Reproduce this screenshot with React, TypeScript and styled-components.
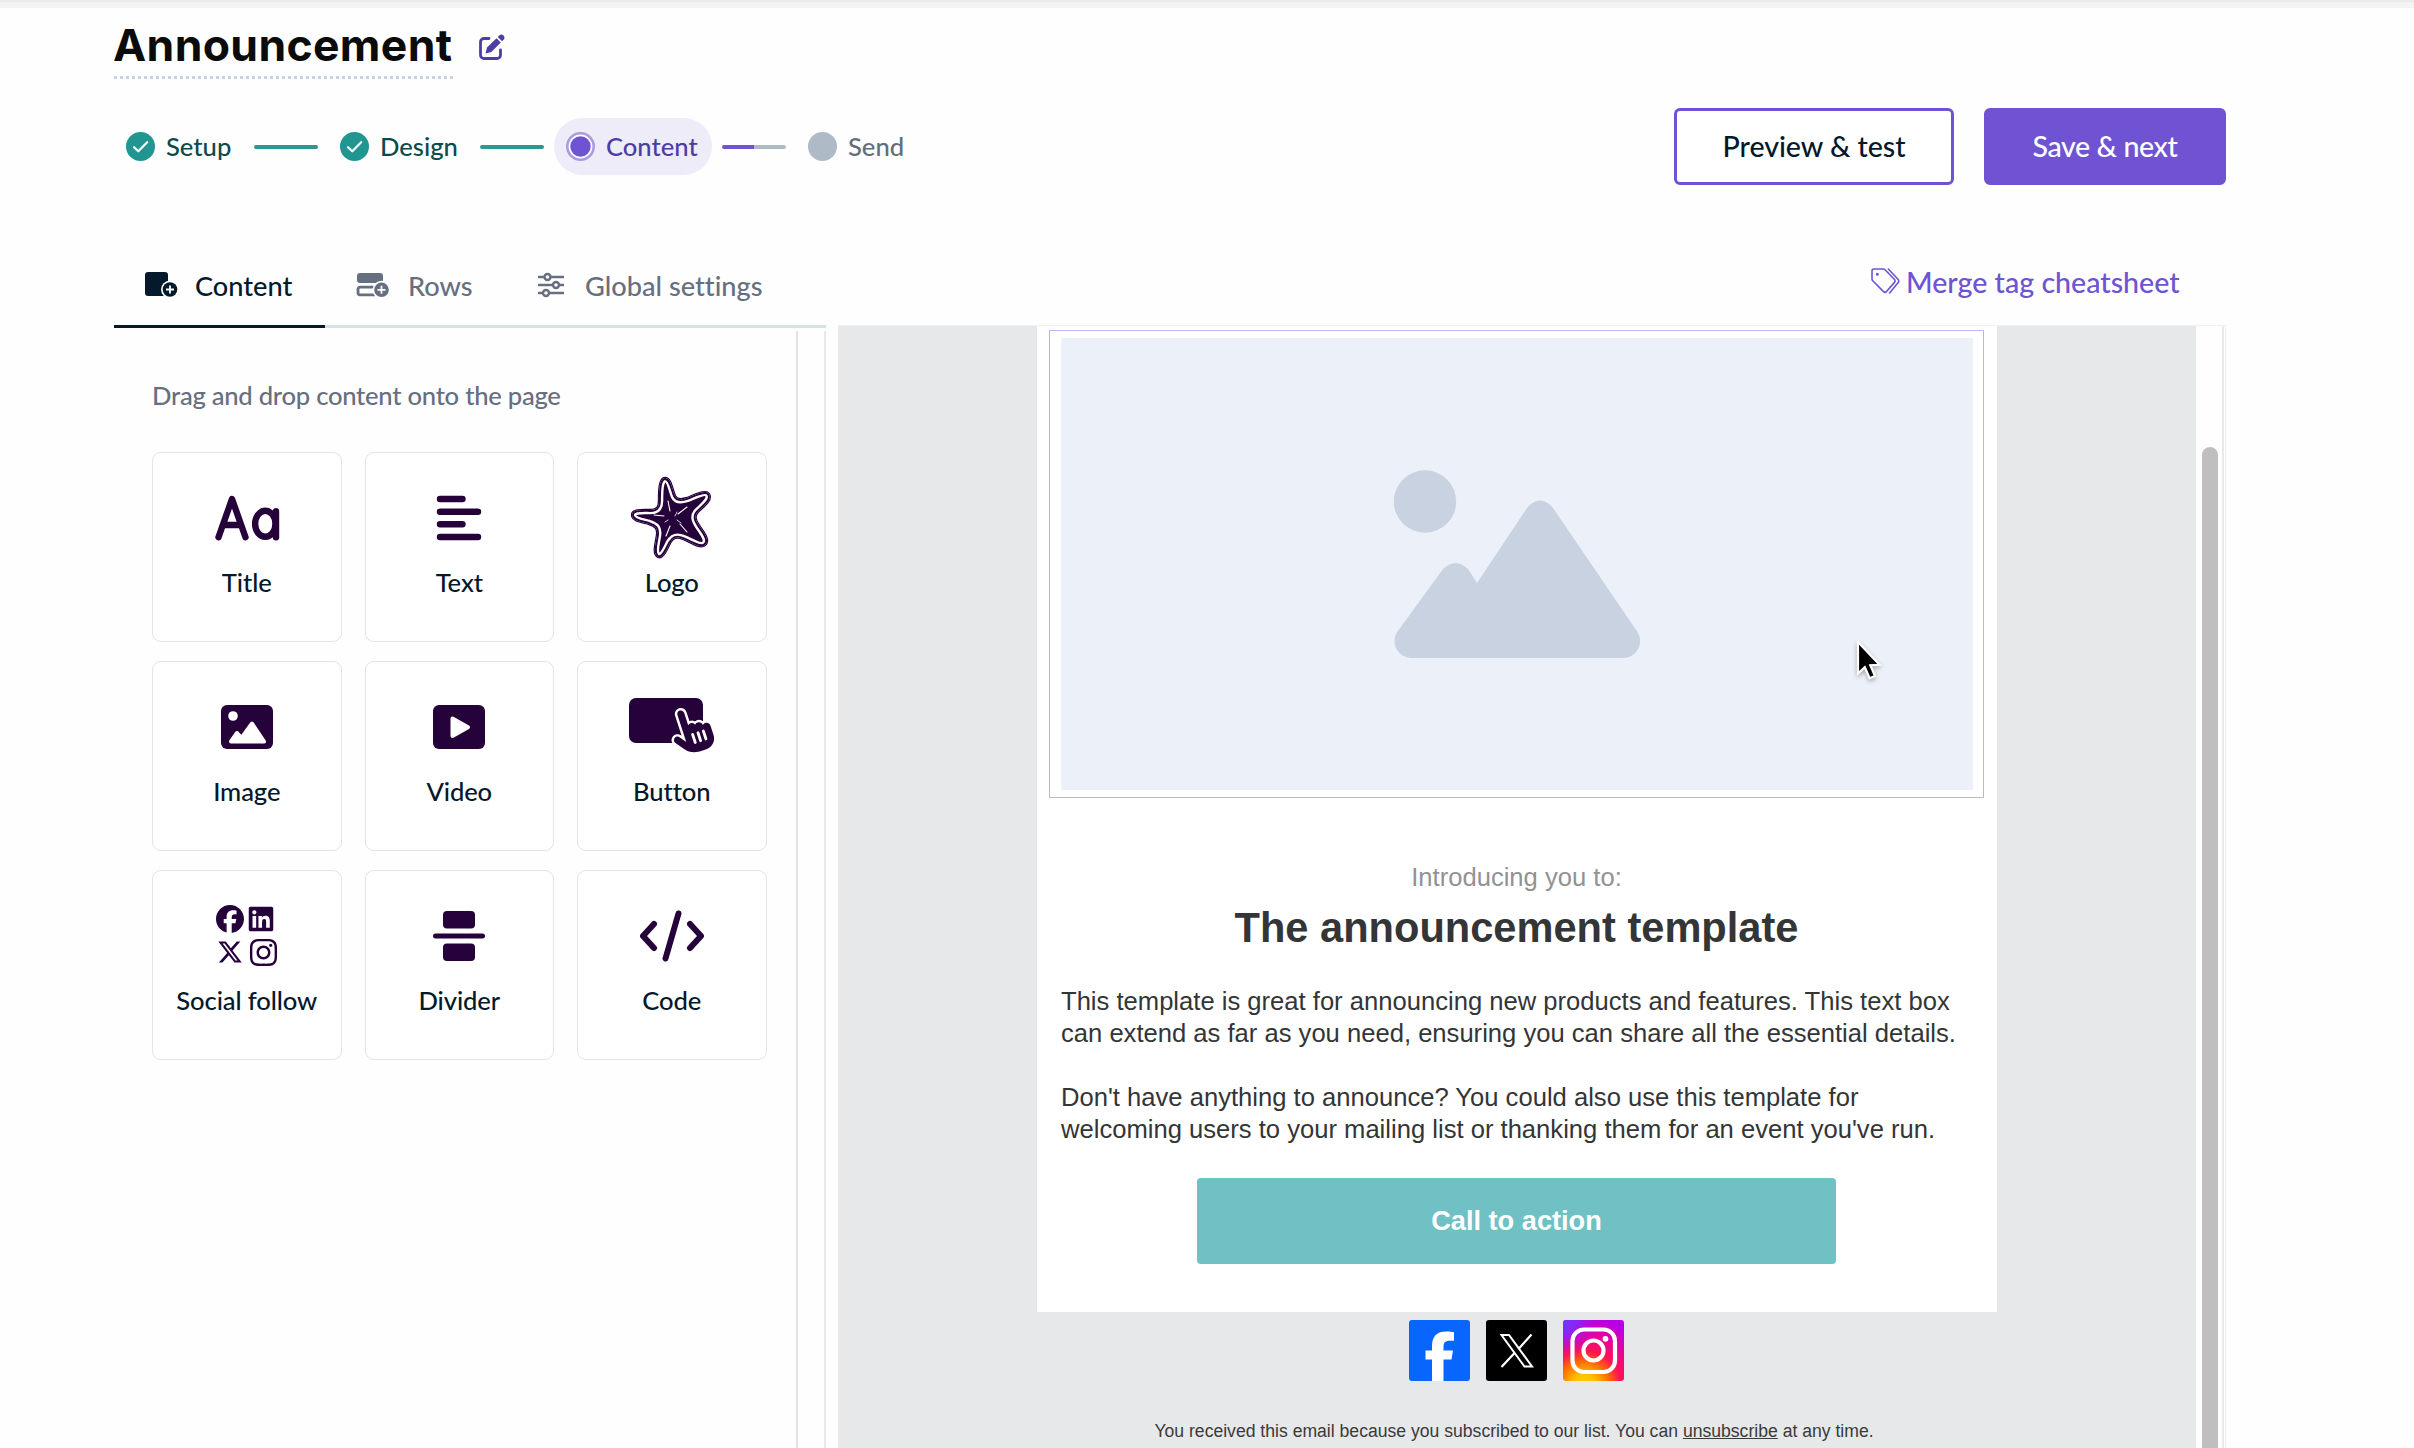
import React from 'react';
import styled, { createGlobalStyle } from 'styled-components';
import { FaFacebook, FaLinkedin, FaXTwitter, FaInstagram, FaHandPointer } from 'react-icons/fa6';

const GlobalStyle = createGlobalStyle`
  * {
    box-sizing: border-box;
  }

  body {
    margin: 0;
    background: #fff;
    font-family: Lato, 'Liberation Sans', sans-serif;
    font-variant-ligatures: none;
    overflow: hidden;
  }
`;

const PageWrapper = styled.div`
  width: 2414px;
  height: 1448px;
  overflow: hidden;
  background: #fefefe;
`;

const TopStrip = styled.div`
  height: 8px;
  background: #f3f3f3;
  border-top: 2px solid #ebebeb;
`;

const Header = styled.header`
  width: 2112px;
  margin-left: 114px;
`;

const TitleRow = styled.div`
  display: flex;
  height: 71px;
`;

const Title = styled.h1`
  width: 339px;
  height: 71px;
  margin: 0;
  padding-top: 11px;
  font-family: Inter, sans-serif;
  font-size: 44.5px;
  font-weight: 700;
  line-height: 52px;
  letter-spacing: 0.35px;
  text-indent: -1px;
  white-space: nowrap;
  color: #0b0b0b;
  background: repeating-linear-gradient(90deg, #c8d3e2 0 3px, transparent 3px 6px) bottom / 100% 3px no-repeat;
`;

const EditIcon = styled.svg`
  width: 26px;
  height: 26px;
  margin: 26px 0 0 26px;
`;

const ActionRow = styled.div`
  display: flex;
  align-items: center;
  height: 77px;
  margin-top: 29px;
`;

const Steps = styled.div`
  display: flex;
  align-items: center;
  flex: 1;
`;

const Step = styled.div<{ $width: number; $color: string; $active?: boolean }>`
  display: flex;
  align-items: center;
  gap: 11px;
  width: ${({ $width }) => $width}px;
  height: 57px;
  padding-left: 12px;
  border-radius: 29px;
  font-size: 25.6px;
  font-weight: 500;
  white-space: nowrap;
  color: ${({ $color }) => $color};
  background: ${({ $active }) => ($active ? '#eeecf8' : 'transparent')};

  svg {
    flex: none;
  }
`;

const StepLabel = styled.span`
  padding-bottom: 2px;
`;

const StepLine = styled.div<{ $from: string; $to: string; $gap: number }>`
  width: 64px;
  height: 4px;
  margin: 0 10px 0 ${({ $gap }) => $gap}px;
  border-radius: 2px;
  background: linear-gradient(90deg, ${({ $from }) => $from} 50%, ${({ $to }) => $to} 50%);
`;

const HeaderButton = styled.button<{ $primary?: boolean }>`
  width: ${({ $primary }) => ($primary ? 242 : 280)}px;
  height: 77px;
  margin-left: ${({ $primary }) => ($primary ? 30 : 0)}px;
  padding: 0 0 2px;
  border: 3px solid #6f53d3;
  border-radius: 6px;
  font-family: inherit;
  font-size: 28.6px;
  font-weight: 500;
  letter-spacing: ${({ $primary }) => ($primary ? -0.4 : -0.05)}px;
  color: ${({ $primary }) => ($primary ? '#fff' : '#04192b')};
  background: ${({ $primary }) => ($primary ? '#6f53d3' : '#fff')};
`;

const Editor = styled.main`
  display: flex;
  height: 1263px;
  margin-left: 114px;
`;

const Sidebar = styled.section`
  width: 712px;
`;

const Tabs = styled.nav`
  display: flex;
  height: 143px;
  padding-top: 57px;
  background: linear-gradient(#d5e3e1, #d5e3e1) bottom / 100% 3px no-repeat;
`;

const Tab = styled.div<{ $width: number; $gap: number; $active?: boolean }>`
  display: flex;
  align-items: center;
  gap: ${({ $gap }) => $gap}px;
  width: ${({ $width }) => $width}px;
  height: 86px;
  padding: 3px 0 0 30px;
  border-bottom: ${({ $active }) => ($active ? '3px solid #04192b' : '3px solid transparent')};
  font-size: 27.2px;
  font-weight: 500;
  white-space: nowrap;
  color: ${({ $active }) => ($active ? '#04192b' : '#666f80')};

  svg {
    flex: none;
  }
`;

const SidebarBody = styled.div`
  height: 1120px;
  margin-top: 3px;
  padding: 47px 0 0 38px;
  border-right: 2px solid #e9e9ea;
  background: linear-gradient(#e2e2e4, #e2e2e4) 682px 0 / 2px 100% no-repeat;
`;

const Hint = styled.p`
  margin: 0 0 40px;
  font-size: 25.6px;
  font-weight: 500;
  line-height: 34px;
  letter-spacing: -0.25px;
  color: #666f80;
`;

const BlockGrid = styled.div`
  display: grid;
  grid-template-columns: repeat(3, 189.5px);
  grid-auto-rows: 190px;
  gap: 19px 23px;
`;

const Block = styled.div`
  display: flex;
  flex-direction: column;
  align-items: center;
  padding-top: 15px;
  border: 1.5px solid #e4e2ea;
  border-radius: 9px;
  background: #fff;
`;

const BlockIcon = styled.div`
  display: flex;
  align-items: center;
  justify-content: center;
  height: 100px;
`;

const BlockLabel = styled.span`
  margin-top: -2px;
  font-size: 25.6px;
  font-weight: 500;
  line-height: 32px;
  letter-spacing: -0.1px;
  color: #04192b;
  white-space: nowrap;
`;

const SocialGrid = styled.div`
  display: grid;
  grid-template-columns: 28px 28px;
  gap: 4px 5px;
  place-items: center;
  color: #26023b;

  svg:nth-child(2) {
    margin-right: 4px;
  }
`;

const PreviewColumn = styled.section`
  width: 1388px;
  margin-left: 12px;
`;

const MergeBar = styled.div`
  display: flex;
  align-items: center;
  gap: 6px;
  height: 140px;
  padding: 53px 0 0 1033px;
  font-size: 28.6px;
  font-weight: 500;
  color: #6f53d3;
  white-space: nowrap;
`;

const PreviewFrame = styled.div`
  display: flex;
  height: 1123px;
  border-top: 1px solid #f0f1f2;
  border-right: 1px solid #f0f0f0;
`;

const Canvas = styled.div`
  display: flex;
  flex-direction: column;
  align-items: center;
  width: 1358px;
  background: #e6e8ea;
`;

const ScrollTrack = styled.div`
  width: 28px;
  padding: 121px 0 0 6px;
  border-right: 2px solid #e9e9e9;
`;

const ScrollThumb = styled.div`
  width: 16px;
  height: 1001px;
  border-radius: 8px 8px 0 0;
  background: #bfbfbf;
`;

const Paper = styled.article`
  display: flex;
  flex-direction: column;
  align-items: center;
  width: 960px;
  height: 986px;
  padding: 4px 1px 0 0;
  background: #fff;
  font-family: 'Liberation Sans', Arial, sans-serif;
  color: #333536;
`;

const ImageBlock = styled.div`
  position: relative;
  width: 935px;
  height: 468px;
  padding: 7px 10px 7px 11px;
  border: 1px solid #bcbcbf;
  border-top-color: #c4b8e8;
`;

const Placeholder = styled.div`
  display: flex;
  justify-content: center;
  height: 452px;
  padding-top: 132px;
  background: #ecf1f9;
`;

const Cursor = styled.svg`
  position: absolute;
  left: 805px;
  top: 308px;
  width: 32px;
  height: 46px;
  overflow: visible;
  filter: drop-shadow(0 2px 2px rgba(0, 0, 0, 0.3));
`;

const Intro = styled.p`
  margin: 63px 0 0;
  font-size: 25.6px;
  line-height: 32px;
  color: #929292;
`;

const Headline = styled.h2`
  margin: 10px 0 0;
  font-size: 41.6px;
  font-weight: 700;
  line-height: 50px;
`;

const BodyText = styled.div`
  width: 911px;
  margin-top: 32px;
  font-size: 25.6px;
  line-height: 32px;
  white-space: nowrap;

  p {
    margin: 0 0 32px;
  }
`;

const CallToAction = styled.div`
  display: flex;
  align-items: center;
  justify-content: center;
  width: 639px;
  height: 86px;
  margin-top: 1px;
  border-radius: 4px;
  font-size: 27.2px;
  font-weight: 700;
  color: #fff;
  background: #70c1c3;
`;

const SocialRow = styled.div`
  display: flex;
  gap: 16px;
  margin: 8px 2px 0 0;
`;

const SocialTile = styled.svg`
  width: 61px;
  height: 61px;
  border-radius: 3px;
`;

const Footer = styled.p`
  margin: 39px 6px 0 0;
  font-family: 'Liberation Sans', Arial, sans-serif;
  font-size: 17.6px;
  line-height: 22px;
  color: #3a3a3a;
  white-space: nowrap;
`;

const plum = '#26023b';

const CheckDot = () => (
  <svg width="29" height="29" viewBox="0 0 29 29">
    <circle cx="14.5" cy="14.5" r="14.5" fill="#219590" />
    <path d="M8 15.2 12.3 19.3 21.2 10.2" fill="none" stroke="#fff" strokeWidth="2.2" strokeLinecap="round" strokeLinejoin="round" />
  </svg>
);

const ActiveDot = () => (
  <svg width="29" height="29" viewBox="0 0 29 29">
    <circle cx="14.5" cy="14.5" r="13.2" fill="#fff" stroke="#aa9ae2" strokeWidth="2.6" />
    <circle cx="14.5" cy="14.5" r="10.2" fill="#6f53d3" />
  </svg>
);

const IdleDot = () => (
  <svg width="29" height="29" viewBox="0 0 29 29">
    <circle cx="14.5" cy="14.5" r="14.5" fill="#afbac7" />
  </svg>
);

const ContentTabIcon = () => (
  <svg width="34" height="28" viewBox="0 0 34 28">
    <rect x="1" y="1" width="23" height="24" rx="3" fill="#04192b" />
    <circle cx="26" cy="18.5" r="9" fill="#fff" />
    <circle cx="26" cy="18.5" r="7.3" fill="#04192b" />
    <path d="M26 14.5v8M22 18.5h8" stroke="#fff" strokeWidth="1.8" />
  </svg>
);

const RowsTabIcon = () => (
  <svg width="34" height="28" viewBox="0 0 34 28">
    <rect x="2" y="2" width="26" height="10" rx="3" fill="#666f80" />
    <path d="M20 16.2H5a2 2 0 0 0-2 2v3.6a2 2 0 0 0 2 2H20" fill="none" stroke="#666f80" strokeWidth="2.8" />
    <circle cx="26.5" cy="18.8" r="9" fill="#fff" />
    <circle cx="26.5" cy="18.8" r="7.3" fill="#666f80" />
    <path d="M26.5 14.8v8M22.5 18.8h8" stroke="#fff" strokeWidth="1.8" />
  </svg>
);

const SettingsTabIcon = () => (
  <svg width="28" height="26" viewBox="0 0 28 26" fill="#fff" stroke="#666f80" strokeWidth="2.4" strokeLinecap="round">
    <path d="M2 5h24M2 13h24M2 21h24" />
    <circle cx="10.5" cy="5" r="3" />
    <circle cx="19" cy="13" r="3" />
    <circle cx="9" cy="21" r="3" />
  </svg>
);

const TagsIcon = () => (
  <svg width="29" height="27" viewBox="0 0 29 27" fill="none" stroke="#6f53d3" strokeWidth="1.6" strokeLinecap="round" strokeLinejoin="round">
    <path d="M3 1h9.3q1 0 1.7.7L23.3 11.2q1.5 1.7 0 3.4L15.5 23.6q-1.5 1.5-3 0L1.7 12.7q-.7-.7-.7-1.7V3q0-2 2-2z" />
    <path d="M17.5 1.2 27 11.2q1.5 1.7 0 3.5L18.6 25" />
    <circle cx="6.3" cy="6.2" r=".7" fill="#6f53d3" />
  </svg>
);

const TitleIcon = () => (
  <svg width="66" height="46" viewBox="0 0 66 46" fill="none" stroke={plum} strokeWidth="6.4" strokeLinecap="round" strokeLinejoin="round">
    <path d="M4.5 42.2 18 4 31.5 42.2M9 30h18" />
    <ellipse cx="51.3" cy="28.8" rx="10.2" ry="13" />
    <path d="M62 16.2v26" />
  </svg>
);

const TextIcon = () => (
  <svg width="46" height="46" viewBox="0 0 46 46" stroke={plum} strokeWidth="6.4" strokeLinecap="round">
    <path d="M4 4h22.5M4 16.7h38M4 29.3h22.5M4 42h38" />
  </svg>
);

const starPath =
  'M34 1C40 1 41 12 44 19C46 23 50 23 56 21C64 18 75 12 78 17C82 24 70 31 66 36C63 40 65 44 69 50C74 57 79 64 74 68C69 72 60 65 52 62C45 59 42 61 39 66C36 72 32 82 27 80C21 77 25 66 26 58C27 51 24 49 18 47C11 45 1 44 1 38C1 32 12 33 19 33C26 33 28 30 28 24C28 15 28 1 34 1Z';

const LogoIcon = () => (
  <svg width="82" height="84" viewBox="0 -1 82 84">
    <clipPath id="starfish">
      <path d={starPath} />
    </clipPath>
    <path d={starPath} fill={plum} stroke={plum} strokeWidth="2.4" />
    <g clipPath="url(#starfish)" fill="none">
      <path d={starPath} stroke="#fff" strokeWidth="8.6" />
      <path d={starPath} stroke={plum} strokeWidth="3.8" />
    </g>
    <g stroke="#fff" strokeWidth="1.1" strokeLinecap="round">
      <path d="M39 34 37 24M47 37 56 30M49 47 56 55M39 49 35 59M33 39 23 38" />
      <path d="M44 39 46 35M46 43 50 46M37 43 34 45" strokeWidth=".8" />
    </g>
  </svg>
);

const ImageIcon = () => (
  <svg width="52" height="44" viewBox="0 0 52 44">
    <rect width="52" height="44" rx="6" fill={plum} />
    <circle cx="12" cy="11" r="4.8" fill="#fff" />
    <path d="M10 36.5 16 28 20.5 33 31 18.5 43 36.5Z" fill="#fff" stroke="#fff" strokeWidth="4" strokeLinejoin="round" />
  </svg>
);

const VideoIcon = () => (
  <svg width="52" height="44" viewBox="0 0 52 44">
    <rect width="52" height="44" rx="6" fill={plum} />
    <path d="M19.5 13.5v17.5L35 22.3Z" fill="#fff" stroke="#fff" strokeWidth="4" strokeLinejoin="round" />
  </svg>
);

const HandGroup = styled.g`
  color: ${plum};
  paint-order: stroke;
`;

const ButtonIcon = () => (
  <svg width="86" height="62" viewBox="0 0 86 62">
    <rect x="0" y="2" width="74" height="45" rx="7" fill={plum} />
    <HandGroup transform="translate(34 20) rotate(-18)">
      <FaHandPointer size={45} overflow="visible" stroke="#fff" strokeWidth="56" />
    </HandGroup>
  </svg>
);

const SocialIcon = () => (
  <SocialGrid>
    <FaFacebook size={28} />
    <FaLinkedin size={28} />
    <FaXTwitter size={26} />
    <FaInstagram size={31} />
  </SocialGrid>
);

const DividerIcon = () => (
  <svg width="52" height="50" viewBox="0 0 52 50" fill={plum}>
    <rect x="10" y="0" width="32" height="17.5" rx="4" />
    <rect x="0" y="22.5" width="52" height="5" rx="2.5" />
    <rect x="10" y="32.5" width="32" height="17.5" rx="4" />
  </svg>
);

const CodeIcon = () => (
  <svg width="66" height="52" viewBox="0 0 66 52" fill="none" stroke={plum} strokeWidth="6" strokeLinecap="round" strokeLinejoin="round">
    <path d="M15 14 4 26 15 38M51 14 62 26 51 38M39.5 3.5 26.5 48.5" />
  </svg>
);

const blocks: { label: string; icon: React.ReactNode }[] = [
  { label: 'Title', icon: <TitleIcon /> },
  { label: 'Text', icon: <TextIcon /> },
  { label: 'Logo', icon: <LogoIcon /> },
  { label: 'Image', icon: <ImageIcon /> },
  { label: 'Video', icon: <VideoIcon /> },
  { label: 'Button', icon: <ButtonIcon /> },
  { label: 'Social follow', icon: <SocialIcon /> },
  { label: 'Divider', icon: <DividerIcon /> },
  { label: 'Code', icon: <CodeIcon /> },
];

const App: React.FC = () => {
  return (
    <PageWrapper>
      <GlobalStyle />
      <TopStrip />
      <Header>
        <TitleRow>
          <Title>Announcement</Title>
          <EditIcon viewBox="0 0 26 26">
            <path d="M10 4.5H5A3.5 3.5 0 0 0 1.5 8v13A3.5 3.5 0 0 0 5 24.5h13a3.5 3.5 0 0 0 3.5-3.5v-5" fill="none" stroke="#4f3da6" strokeWidth="2.8" strokeLinecap="round" />
            <path d="M6.500 19.5 8 13.5 17.5 4.2 21.8 8.5 12.3 18Z" fill="#4f3da6" />
            <path d="M18.7 3 20.3 1.4Q22.3-.4 24.4 1.6 26.5 3.7 24.6 5.7L23 7.3Z" fill="#4f3da6" />
          </EditIcon>
        </TitleRow>
        <ActionRow>
          <Steps>
            <Step $width={117} $color="#0c4a4c">
              <CheckDot />
              <StepLabel>Setup</StepLabel>
            </Step>
            <StepLine $from="#2b9893" $to="#2b9893" $gap={23} />
            <Step $width={129} $color="#0c4a4c">
              <CheckDot />
              <StepLabel>Design</StepLabel>
            </Step>
            <StepLine $from="#2b9893" $to="#2b9893" $gap={23} />
            <Step $width={158} $color="#4c3da3" $active>
              <ActiveDot />
              <StepLabel>Content</StepLabel>
            </Step>
            <StepLine $from="#6f53d3" $to="#afbac7" $gap={10} />
            <Step $width={130} $color="#636d7b">
              <IdleDot />
              <StepLabel>Send</StepLabel>
            </Step>
          </Steps>
          <HeaderButton>Preview &amp; test</HeaderButton>
          <HeaderButton $primary>Save &amp; next</HeaderButton>
        </ActionRow>
      </Header>

      <Editor>
        <Sidebar>
          <Tabs>
            <Tab $width={211} $gap={17} $active>
              <ContentTabIcon />
              Content
            </Tab>
            <Tab $width={182} $gap={19}>
              <RowsTabIcon />
              Rows
            </Tab>
            <Tab $width={260} $gap={20}>
              <SettingsTabIcon />
              Global settings
            </Tab>
          </Tabs>
          <SidebarBody>
            <Hint>Drag and drop content onto the page</Hint>
            <BlockGrid>
              {blocks.map(({ label, icon }) => (
                <Block key={label}>
                  <BlockIcon>{icon}</BlockIcon>
                  <BlockLabel>{label}</BlockLabel>
                </Block>
              ))}
            </BlockGrid>
          </SidebarBody>
        </Sidebar>

        <PreviewColumn>
          <MergeBar>
            <TagsIcon />
            Merge tag cheatsheet
          </MergeBar>
          <PreviewFrame>
            <Canvas>
              <Paper>
                <ImageBlock>
                  <Placeholder>
                    <svg width="246" height="190" viewBox="0 0 246 190" fill="#c9d2e1">
                      <circle cx="31" cy="31.5" r="31.2" />
                      <path d="M17 188A17 17 0 0 1 2.5 163L49 99Q62 87 74 99L83 113 133 38Q146 23 159 38L243.5 162A17 17 0 0 1 230 188Z" />
                    </svg>
                  </Placeholder>
                  <Cursor viewBox="0 0 32 46">
                    <path d="M3 3V34.5L9.8 28.2 14.6 39.3 20 37 15.3 26.3 24.5 25.8Z" fill="#000" stroke="#fff" strokeWidth="2.2" />
                  </Cursor>
                </ImageBlock>
                <Intro>Introducing you to:</Intro>
                <Headline>The announcement template</Headline>
                <BodyText>
                  <p>
                    This template is great for announcing new products and features. This text box
                    <br />
                    can extend as far as you need, ensuring you can share all the essential details.
                  </p>
                  <p>
                    Don't have anything to announce? You could also use this template for
                    <br />
                    welcoming users to your mailing list or thanking them for an event you've run.
                  </p>
                </BodyText>
                <CallToAction>Call to action</CallToAction>
              </Paper>
              <SocialRow>
                <SocialTile viewBox="0 0 61 61">
                  <rect width="61" height="61" fill="#0866ff" />
                  <path d="M23 61V39.5H16.5V30.5H23V26.5C23 16 28 11.5 37.5 11.5 40.5 11.5 43.5 11.9 45 12.3V20.7H40.5C36 20.7 34.5 22.8 34.5 27V30.5H44L42.5 39.5H34.5V61Z" fill="#fff" />
                </SocialTile>
                <SocialTile viewBox="0 0 61 61">
                  <rect width="61" height="61" fill="#000" />
                  <path d="M15.5 15h7.5L46 46.5h-7.5Z" fill="none" stroke="#fff" strokeWidth="2" />
                  <path d="M45.5 14.5 32.5 29M28.5 33 15.5 47" stroke="#fff" strokeWidth="2.2" />
                </SocialTile>
                <SocialTile viewBox="0 0 61 61">
                  <defs>
                    <radialGradient id="igWarm" cx="0.35" cy="1.1" r="1.15">
                      <stop offset="0" stopColor="#ffd600" />
                      <stop offset="0.18" stopColor="#ffc000" />
                      <stop offset="0.36" stopColor="#ff7000" />
                      <stop offset="0.52" stopColor="#ff1450" />
                      <stop offset="0.75" stopColor="#e800a0" />
                      <stop offset="1" stopColor="#b500e8" />
                    </radialGradient>
                    <radialGradient id="igCool" cx="0" cy="0" r="0.6">
                      <stop offset="0" stopColor="#6a3cff" />
                      <stop offset="0.4" stopColor="#7c2cff" stopOpacity="0.8" />
                      <stop offset="1" stopColor="#b400ff" stopOpacity="0" />
                    </radialGradient>
                  </defs>
                  <rect width="61" height="61" fill="url(#igWarm)" />
                  <rect width="61" height="61" fill="url(#igCool)" />
                  <rect x="9.5" y="9.5" width="42.5" height="42.5" rx="11.5" fill="none" stroke="#fff" strokeWidth="4.2" />
                  <circle cx="30.5" cy="30.5" r="10" fill="none" stroke="#fff" strokeWidth="4.2" />
                  <circle cx="42.5" cy="18.8" r="2.9" fill="#fff" />
                </SocialTile>
              </SocialRow>
              <Footer>
                You received this email because you subscribed to our list. You can <u>unsubscribe</u> at any time.
              </Footer>
            </Canvas>
            <ScrollTrack>
              <ScrollThumb />
            </ScrollTrack>
          </PreviewFrame>
        </PreviewColumn>
      </Editor>
    </PageWrapper>
  );
};

export default App;
